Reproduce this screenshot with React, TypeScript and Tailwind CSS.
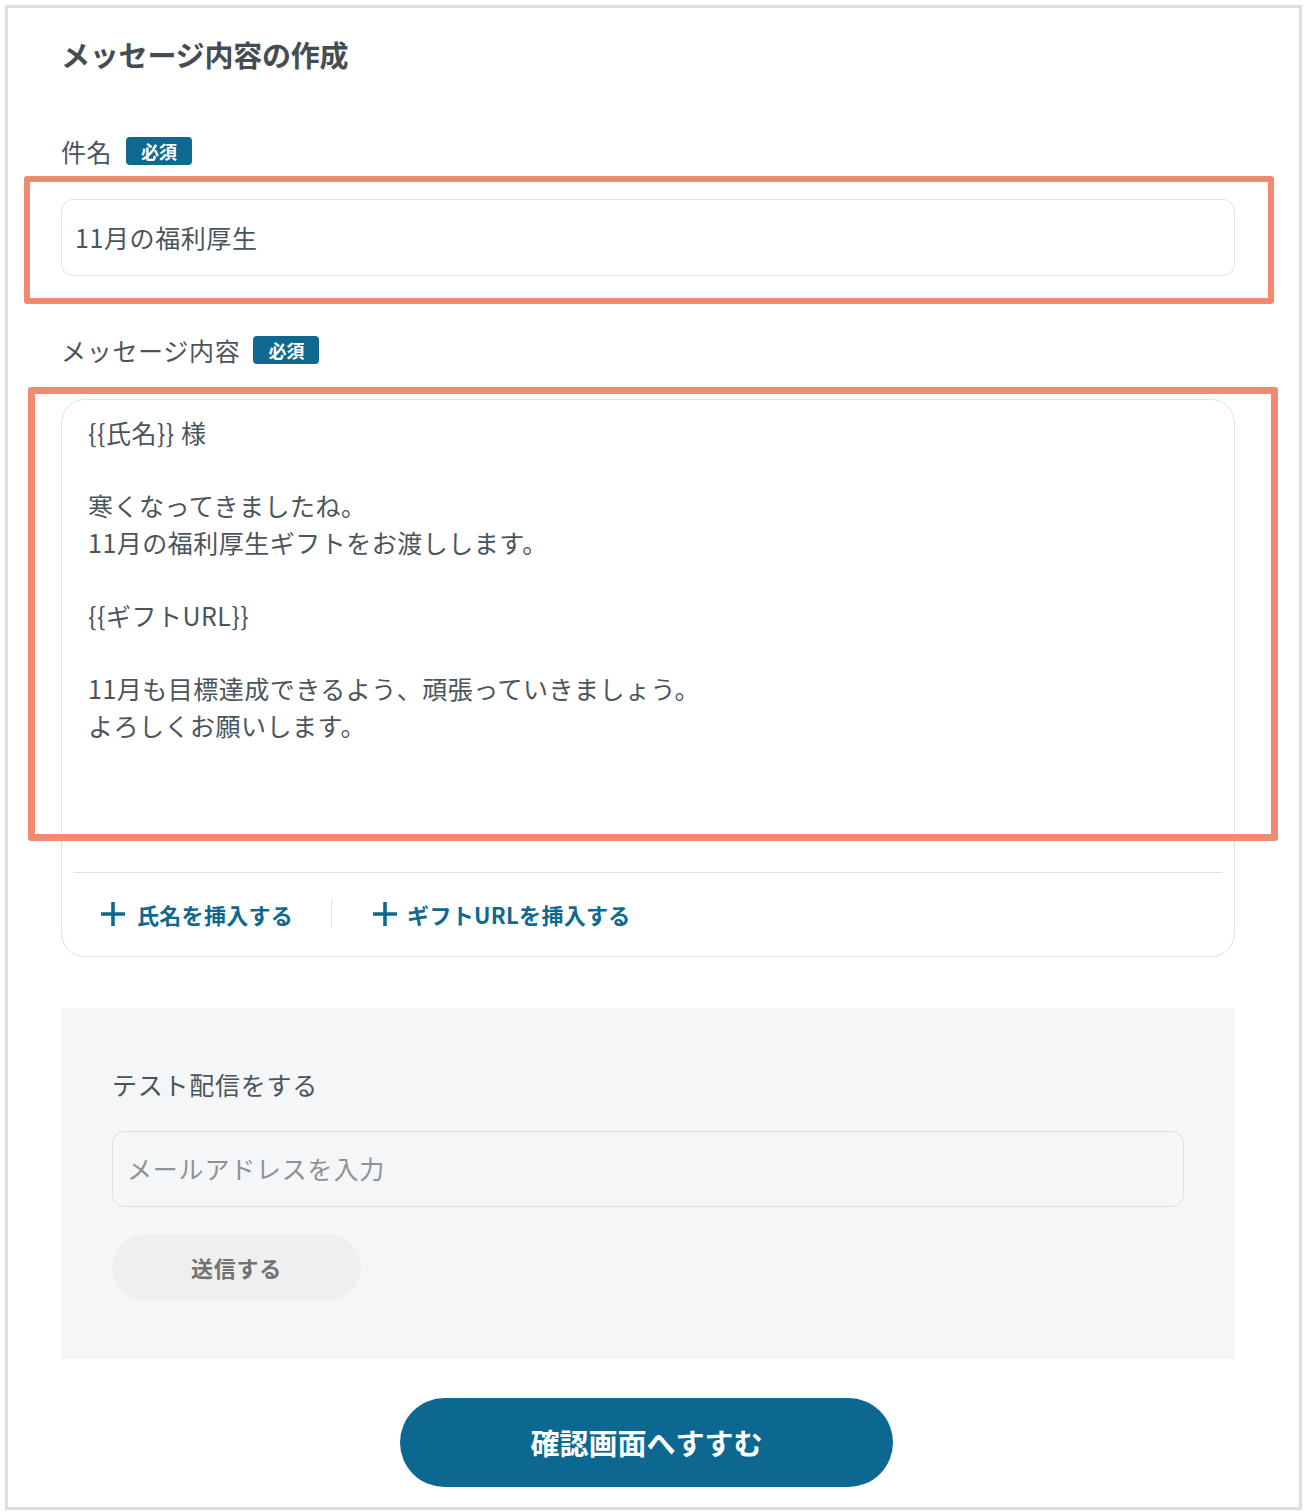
import React from "react";

const font = { fontFamily: '"Noto Sans CJK JP", "Noto Sans", sans-serif' };

function Plus() {
  return (
    <svg width="26" height="26" viewBox="0 0 26 26" className="shrink-0">
      <path d="M13 1 V25 M1 13 H25" stroke="#0e6890" strokeWidth="3.6" strokeLinecap="butt" />
    </svg>
  );
}

function Badge() {
  return (
    <span className="inline-flex h-[28px] w-[66px] items-center justify-center rounded-[4px] bg-[#0e6890] text-[18px] font-bold leading-none text-white">
      必須
    </span>
  );
}

export default function App() {
  const lines = [
    "{{氏名}} 様",
    "",
    "寒くなってきましたね。",
    "11月の福利厚生ギフトをお渡しします。",
    "",
    "{{ギフトURL}}",
    "",
    "11月も目標達成できるよう、頑張っていきましょう。",
    "よろしくお願いします。",
  ];
  return (
    <div className="min-h-[1512px] bg-white p-[5px]" style={font}>
      <div className="relative h-[1505px] w-[1297px] border-[3px] border-[#dedede] bg-white pl-[53px] pt-[26px] text-[#4a555b]">
        <h1 className="h-[40px] text-[29px] font-bold leading-[40px] tracking-[-0.2px] text-[#434d53]">
          メッセージ内容の作成
        </h1>

        <div className="mt-[63px] flex h-[28px] items-center gap-[14px]">
          <span className="text-[25px] leading-none tracking-[0.5px]">件名</span>
          <Badge />
        </div>

        <div className="mt-[34px] flex h-[77px] w-[1174px] items-center rounded-[12px] border border-[#dde1e5] bg-white pl-[13px]">
          <span className="text-[25px] tracking-[0.6px] text-[#4a555b]">11月の福利厚生</span>
        </div>

        <div className="mt-[60px] flex h-[28px] items-center gap-[13px]">
          <span className="text-[25px] leading-none tracking-[0.7px]">メッセージ内容</span>
          <Badge />
        </div>

        <div className="mt-[35px] flex h-[558px] w-[1174px] flex-col rounded-[24px] border border-[#dde1e5] bg-white">
          <div className="h-[472px] pl-[26px] pt-[14px] text-[25px] leading-[36.6px] tracking-[0.5px]">
            {lines.map((l, i) => (
              <div key={i} className="h-[36.6px] whitespace-pre">
                {l}
              </div>
            ))}
          </div>
          <div className="mx-[12px] h-px bg-[#dde1e5]" />
          <div className="flex flex-1 items-center pl-[38px] pb-[1px]">
            <div className="flex items-center gap-[11px]">
              <Plus />
              <span className="text-[22px] font-bold tracking-[0.3px] text-[#0e6890]">氏名を挿入する</span>
            </div>
            <div className="ml-[38px] mr-[40px] h-[26px] w-px bg-[#dde1e5]" />
            <div className="flex items-center gap-[9px]">
              <Plus />
              <span className="text-[22px] font-bold tracking-[0.3px] text-[#0e6890]">ギフトURLを挿入する</span>
            </div>
          </div>
        </div>

        <div className="mt-[51px] w-[1174px] bg-[#f5f6f8] px-[51px] pb-[58px] pt-[58px]">
          <div className="h-[36px] text-[25px] leading-[36px] tracking-[0.75px]">テスト配信をする</div>
          <div className="mt-[29px] flex h-[76px] items-center rounded-[12px] border border-[#dcdfe3] pl-[14px]">
            <span className="text-[25px] tracking-[0.8px] text-[#8c9396]">メールアドレスを入力</span>
          </div>
          <button className="mt-[27px] flex h-[67px] w-[249px] items-center justify-center rounded-full bg-[#efefef] text-[22px] font-bold tracking-[0.7px] text-[#727272]">
            送信する
          </button>
        </div>

        <div className="mt-[39px] flex w-[1174px] justify-center">
          <button className="ml-[-3px] flex h-[89px] w-[493px] items-center justify-center rounded-full bg-[#0d6891] text-[29px] font-bold tracking-[0px] text-white">
            確認画面へすすむ
          </button>
        </div>

        <div className="pointer-events-none absolute left-[16px] top-[168px] h-[128px] w-[1250px] rounded-[3px] border-[6px] border-[#f08a71]" />
        <div className="pointer-events-none absolute left-[20px] top-[379px] h-[454px] w-[1250px] rounded-[3px] border-[7px] border-[#f08a71]" />
      </div>
    </div>
  );
}
